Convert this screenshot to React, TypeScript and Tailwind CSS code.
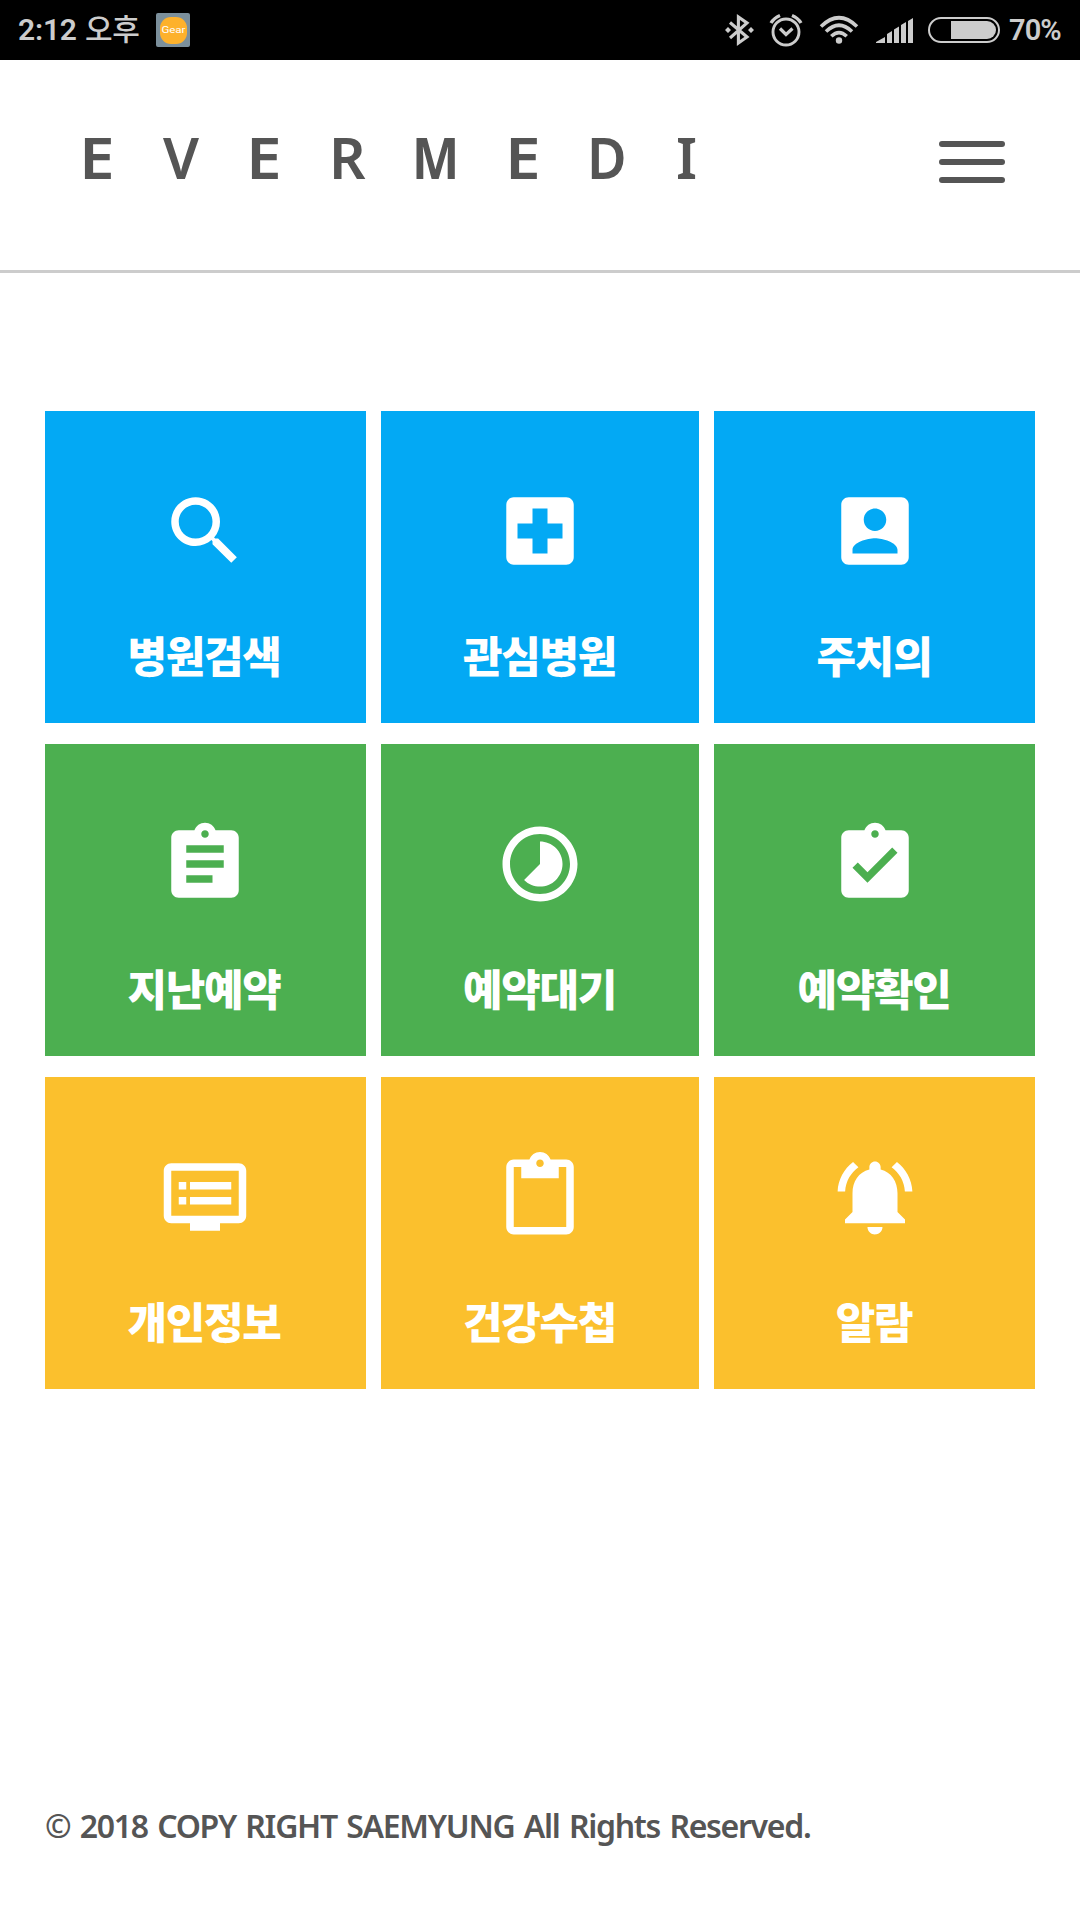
import React from "react";

type Tile = { label: string; path: string };

const rows: { color: string; tiles: Tile[] }[] = [
  {
    color: "bg-[#03a9f4]",
    tiles: [
      {
        label: "병원검색",
        path: "M15.5 14h-.79l-.28-.27C15.41 12.59 16 11.11 16 9.5 16 5.91 13.09 3 9.5 3S3 5.91 3 9.5 5.91 16 9.5 16c1.61 0 3.09-.59 4.23-1.57l.27.28v.79l5 4.99L20.49 19l-4.99-5zm-6 0C7.01 14 5 11.99 5 9.5S7.01 5 9.5 5 14 7.01 14 9.5 11.99 14 9.5 14z",
      },
      {
        label: "관심병원",
        path: "M19 3H5c-1.1 0-1.99.9-1.99 2L3 19c0 1.1.9 2 2 2h14c1.1 0 2-.9 2-2V5c0-1.1-.9-2-2-2zm-1 11h-4v4h-4v-4H6v-4h4V6h4v4h4v4z",
      },
      {
        label: "주치의",
        path: "M3 5v14c0 1.1.89 2 2 2h14c1.1 0 2-.9 2-2V5c0-1.1-.9-2-2-2H5c-1.11 0-2 .9-2 2zm12 4c0 1.66-1.34 3-3 3s-3-1.34-3-3 1.34-3 3-3 3 1.34 3 3zm-9 8c0-2 4-3.1 6-3.1s6 1.1 6 3.1v1H6v-1z",
      },
    ],
  },
  {
    color: "bg-[#4caf50]",
    tiles: [
      {
        label: "지난예약",
        path: "M19 3h-4.18C14.4 1.84 13.3 1 12 1c-1.3 0-2.4.84-2.82 2H5c-1.1 0-2 .9-2 2v14c0 1.1.9 2 2 2h14c1.1 0 2-.9 2-2V5c0-1.1-.9-2-2-2zm-7 0c.55 0 1 .45 1 1s-.45 1-1 1-1-.45-1-1 .45-1 1-1zm2 14H7v-2h7v2zm3-4H7v-2h10v2zm0-4H7V7h10v2z",
      },
      {
        label: "예약대기",
        path: "M16.24 7.76C15.07 6.59 13.54 6 12 6v6l-4.24 4.24c2.34 2.34 6.14 2.34 8.49 0 2.34-2.34 2.34-6.14-.01-8.48zM12 2C6.48 2 2 6.48 2 12s4.48 10 10 10 10-4.48 10-10S17.52 2 12 2zm0 18c-4.42 0-8-3.58-8-8s3.58-8 8-8 8 3.58 8 8-3.58 8-8 8z",
      },
      {
        label: "예약확인",
        path: "M19 3h-4.18C14.4 1.84 13.3 1 12 1c-1.3 0-2.4.84-2.82 2H5c-1.1 0-2 .9-2 2v14c0 1.1.9 2 2 2h14c1.1 0 2-.9 2-2V5c0-1.1-.9-2-2-2zm-7 0c.55 0 1 .45 1 1s-.45 1-1 1-1-.45-1-1 .45-1 1-1zm-2 14l-4-4 1.41-1.41L10 14.17l6.59-6.59L18 9l-8 8z",
      },
    ],
  },
  {
    color: "bg-[#fbc02d]",
    tiles: [
      {
        label: "개인정보",
        path: "M21 3H3c-1.1 0-2 .9-2 2v12c0 1.1.9 2 2 2h5v2h8v-2h5c1.1 0 1.99-.9 1.99-2L23 5c0-1.1-.9-2-2-2zm0 14H3V5h18v12zm-2-9H8v2h11V8zm0 4H8v2h11v-2zM7 8H5v2h2V8zm0 4H5v2h2v-2z",
      },
      {
        label: "건강수첩",
        path: "M19 2h-4.18C14.4.84 13.3 0 12 0c-1.3 0-2.4.84-2.82 2H5c-1.1 0-2 .9-2 2v16c0 1.1.9 2 2 2h14c1.1 0 2-.9 2-2V4c0-1.1-.9-2-2-2zm-7 0c.55 0 1 .45 1 1s-.45 1-1 1-1-.45-1-1 .45-1 1-1zm7 18H5V4h2v3h10V4h2v16z",
      },
      {
        label: "알람",
        path: "M7.58 4.08L6.15 2.65C3.75 4.48 2.17 7.3 2.03 10.5h2c.15-2.65 1.51-4.97 3.55-6.42zm12.39 6.42h2c-.15-3.2-1.73-6.02-4.12-7.85l-1.42 1.43c2.02 1.45 3.39 3.77 3.54 6.42zM18 11c0-3.07-1.64-5.64-4.5-6.32V4c0-.83-.67-1.5-1.5-1.5s-1.5.67-1.5 1.5v.68C7.63 5.36 6 7.92 6 11v5l-2 2v1h16v-1l-2-2v-5zm-6 11c.14 0 .27-.01.4-.04.65-.14 1.18-.58 1.44-1.18.1-.24.15-.5.15-.78h-4c.01 1.1.9 2 2.01 2z",
      },
    ],
  },
];

const wordmark = [
  { letter: "E", slot: "w-[84px] origin-left scale-x-[1.12]" },
  { letter: "V", slot: "w-[83px]" },
  { letter: "E", slot: "w-[83px] origin-left scale-x-[1.12]" },
  { letter: "R", slot: "w-[83px]" },
  { letter: "M", slot: "w-[93px] origin-left scale-x-[0.88] font-bold" },
  { letter: "E", slot: "w-[82px] origin-left scale-x-[1.12]" },
  { letter: "D", slot: "w-[89px] origin-left scale-x-[0.95]" },
  { letter: "I", slot: "w-[24px]" },
];

function StatusBar() {
  return (
    <div className="flex h-[60px] items-center bg-black pl-[18px] pr-[19px] text-[30px] font-medium text-[#cccccc] font-['Roboto','Noto_Sans_CJK_KR',sans-serif]">
      <span className="w-[67px] whitespace-nowrap font-semibold leading-[60px] tracking-[-0.2px]">2:12</span>
      <span className="w-[71px] whitespace-nowrap text-[30px] font-medium leading-[60px] tracking-[-0.3px]">오후</span>
      <span className="flex h-[34px] w-[34px] items-center justify-center rounded-[2px] bg-[#7b8f9b]">
        <span className="flex h-[27px] w-[27px] items-center justify-center rounded-[11px] bg-[#fdb12b] text-[10px] font-normal leading-none text-white">
          <span className="scale-x-[1.15] scale-y-[0.9]">Gear</span>
        </span>
      </span>
      <div className="ml-auto flex items-center">
        <svg className="mr-[15px]" width="30" height="32" viewBox="0 0 30 32" fill="none" stroke="#ccc" strokeWidth="3.1">
          <path d="M6 8.5L23 23L14.4 29V3L23 9L6 24" />
          <path d="M4 13l3 3-3 3-3-3zM27 13l3 3-3 3-3-3z" fill="#ccc" stroke="none" />
        </svg>
        <svg className="mr-[16px]" width="34" height="34" viewBox="0 0 34 34" fill="none" stroke="#ccc" strokeWidth="2.9">
          <circle cx="17" cy="19" r="13" />
          <path d="M11 15.500l6 6 6.500-6" strokeWidth="3.2" />
          <path d="M2 10Q5 5 11 2.5M23 2.5Q29 5 32 10" strokeWidth="3.4" />
        </svg>
        <svg className="mr-[17px]" width="40" height="32" viewBox="0 0 40 32" fill="none" stroke="#ccc" strokeWidth="3.6">
          <path d="M2 12.5Q20 -5 38 12.5M7 17.5Q20 5 33 17.5M12.3 22.3Q20 15 27.7 22.3" />
          <circle cx="20" cy="26.5" r="3.2" fill="#ccc" stroke="none" />
        </svg>
        <svg className="mr-[15px]" width="37" height="32" viewBox="0 0 37 32" fill="#ccc">
          <path d="M0 29v-1l9-5v6zM11 20l5-3v12h-5zM18 15.500l5-3v16.500h-5zM25 11l5-3v21h-5zM32 7l5-3v25h-5z" />
        </svg>
        <svg className="mr-[9px]" width="72" height="26" viewBox="0 0 72 26">
          <rect x="1" y="1" width="70" height="24" rx="12" fill="none" stroke="#ccc" strokeWidth="2" />
          <path d="M23 4h36a9 9 0 0 1 0 18H23z" fill="#ccc" />
        </svg>
        <span className="w-[52px] whitespace-nowrap text-[29px] font-semibold leading-[60px] tracking-[-0.9px]">70%</span>
      </div>
    </div>
  );
}

export default function App() {
  return (
    <div className="flex h-[1920px] w-[1080px] flex-col overflow-hidden bg-white font-['Noto_Sans','Noto_Sans_CJK_KR',sans-serif] text-[#555555]">
      <StatusBar />
      <header className="flex h-[213px] items-start justify-between border-b-[3px] border-[#cccccc] pl-[79px] pr-[75px]">
        <h1 className="mt-[67px] flex whitespace-nowrap text-[57px] font-semibold leading-[60px]">
          {wordmark.map((item, i) => (
            <span key={i} className={item.slot}>
              {item.letter}
            </span>
          ))}
        </h1>
        <div className="mt-[81px] flex flex-col gap-3">
          <span className="h-1.5 w-[66px] rounded-full bg-[#555555]" />
          <span className="h-1.5 w-[66px] rounded-full bg-[#555555]" />
          <span className="h-1.5 w-[66px] rounded-full bg-[#555555]" />
        </div>
      </header>
      <main className="mt-[138px] flex flex-col gap-[21px] px-[45px]">
        {rows.map((row) => (
          <div key={row.color} className="grid grid-cols-[321px_318px_321px] gap-[15px]">
            {row.tiles.map((tile) => (
              <div
                key={tile.label}
                className={`flex h-[312px] flex-col items-center pt-[75px] text-white first:pr-[2px] ${row.color}`}
              >
                <svg width="90" height="90" viewBox="0 0 24 24" fill="currentColor">
                  <path d={tile.path} />
                </svg>
                <span className="mt-[48px] mr-px whitespace-nowrap text-[43px] font-black leading-[60px] tracking-[-1.3px] font-['Noto_Sans_CJK_KR',sans-serif]">
                  {tile.label}
                </span>
              </div>
            ))}
          </div>
        ))}
      </main>
      <footer className="mt-auto mb-[72px] pl-[45px]">
        <p className="whitespace-nowrap text-[32px] font-semibold leading-[44px] tracking-[-1.3px] [word-spacing:2.4px]">
          © 2018 COPY RIGHT SAEMYUNG All Rights Reserved.
        </p>
      </footer>
    </div>
  );
}
